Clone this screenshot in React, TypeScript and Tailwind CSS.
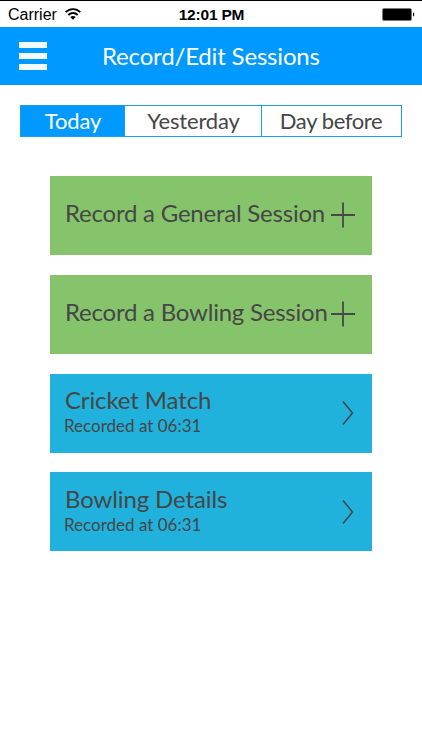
import React from "react";

function StatusBar() {
  return (
    <div className="grid h-[27px] grid-cols-3 items-center border-t border-black bg-white pt-[2px] pr-[7px] pl-[8px] font-['Liberation_Sans',sans-serif] text-[16px] leading-none text-black">
      <div className="flex items-center gap-[8px]">
        <span>Carrier</span>
        <svg className="mb-[2px]" width="16" height="12" viewBox="0 0 16 12" fill="none" stroke="#000" strokeWidth="1.9">
          <path d="M.7 4.2C4.8.1 11.2.1 15.3 4.2" />
          <path d="M3.3 7C6 4.4 10 4.4 12.7 7" />
          <path d="M8 11.7 5.3 9.1C6.8 7.6 9.2 7.6 10.7 9.1Z" fill="#000" stroke="none" />
        </svg>
      </div>
      <span className="text-center text-[15.5px] font-bold tracking-[-0.2px] whitespace-nowrap">12:01 PM</span>
      <svg className="mb-[2px] justify-self-end" width="33" height="13" viewBox="0 0 33 13">
        <rect x=".5" y=".5" width="29" height="12" rx="1.5" stroke="#777" strokeWidth=".8" />
        <path d="M31 4.5C32.7 5 32.7 8 31 8.5Z" />
      </svg>
    </div>
  );
}

function RecordCard({ label }: { label: string }) {
  return (
    <button className="flex h-[79px] items-center justify-between bg-[#86c46c] pr-[17px] pl-[15px] text-left">
      <span className="pb-[5px] text-[24px] leading-[30px] tracking-[-0.22px] whitespace-nowrap">{label}</span>
      <svg className="mb-px shrink-0" width="24" height="26" viewBox="0 0 24 26" stroke="#484848" strokeWidth="1.8">
        <path d="M0 13H24M12 .5V25.5" />
      </svg>
    </button>
  );
}

function SessionCard({ title, time }: { title: string; time: string }) {
  return (
    <button className="flex h-[79px] items-center justify-between bg-[#20b2dc] pr-[18px] pl-[14px] text-left">
      <span className="flex flex-col pb-[1.4px]">
        <span className="pl-px text-[24px] leading-[26px] tracking-[-0.12px]">{title}</span>
        <span className="pt-[2px] text-[17px] leading-[22px]">Recorded at {time}</span>
      </span>
      <svg width="12" height="26" viewBox="0 0 12 26" fill="none" stroke="#444" strokeWidth="1.5">
        <path d="M1 1.5 10.5 13 1 24.5" />
      </svg>
    </button>
  );
}

export default function App() {
  return (
    <div className="h-[750px] w-[422px] overflow-hidden bg-white font-['Lato',sans-serif] text-[#464646]">
      <StatusBar />
      <header className="grid h-[58px] grid-cols-[102px_1fr_102px] items-center bg-[#0099ff] text-white">
        <div className="ml-[19px] flex w-[28px] flex-col gap-[5px]">
          <span className="h-[6px] bg-[#f2faff]" />
          <span className="h-[6px] bg-[#f2faff]" />
          <span className="h-[6px] bg-[#f2faff]" />
        </div>
        <h1 className="text-[24px] leading-[30px] tracking-[-0.17px] whitespace-nowrap">Record/Edit Sessions</h1>
      </header>
      <nav className="mx-[20px] mt-[20px] grid h-[32px] grid-cols-[103px_136px_1fr] gap-px bg-[#1a9cf5] p-px text-[22px] leading-[30px] tracking-[-0.15px]">
        <button className="bg-[#0099ff] pl-px text-white">Today</button>
        <button className="bg-white pl-px">Yesterday</button>
        <button className="bg-white pr-px tracking-[-0.4px]">Day before</button>
      </nav>
      <main className="mr-[50px] ml-[50px] mt-[39px] flex flex-col gap-[19.8px]">
        <RecordCard label="Record a General Session" />
        <RecordCard label="Record a Bowling Session" />
        <SessionCard title="Cricket Match" time="06:31" />
        <SessionCard title="Bowling Details" time="06:31" />
      </main>
    </div>
  );
}
